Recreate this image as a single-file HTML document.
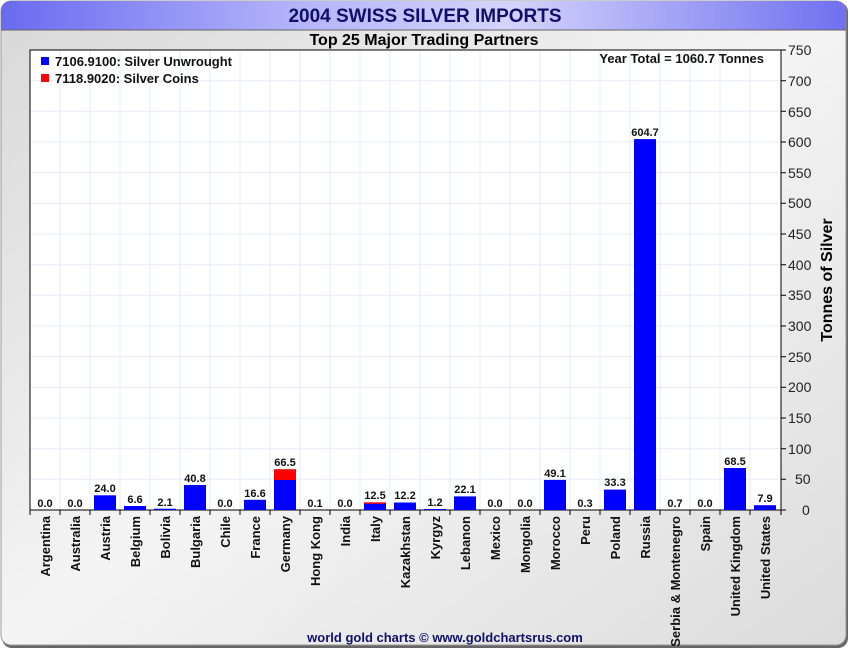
<!DOCTYPE html>
<html><head><meta charset="utf-8"><style>
html,body{margin:0;padding:0;width:850px;height:650px;overflow:hidden;background:#fff}
svg{display:block;font-family:"Liberation Sans",Arial,sans-serif}
</style></head><body>
<svg width="850" height="650" viewBox="0 0 850 650">
<defs>
<linearGradient id="tb" x1="0" x2="1" y1="0" y2="0"><stop offset="0" stop-color="#6a6af0"/><stop offset="0.35" stop-color="#b4b4fa"/><stop offset="0.6" stop-color="#d4d4fc"/><stop offset="1" stop-color="#7070f0"/></linearGradient>
<linearGradient id="bg" x1="0" x2="1" y1="0" y2="1"><stop offset="0" stop-color="#d8d8d8"/><stop offset="0.5" stop-color="#f4f4f4"/><stop offset="1" stop-color="#dcdcdc"/></linearGradient>
</defs>
<rect x="2" y="2" width="846" height="646" rx="10" fill="#666"/>
<rect x="1" y="1" width="845" height="644" rx="10" fill="url(#bg)" stroke="#999"/>
<path d="M1 30 V11 A10 10 0 0 1 11 1 H836 A10 10 0 0 1 846 11 V30 Z" fill="url(#tb)"/>
<line x1="1" y1="30" x2="846" y2="30" stroke="#666"/>
<text x="425" y="22" text-anchor="middle" font-size="19" font-weight="bold" fill="#10106a">2004 SWISS SILVER IMPORTS</text>
<text x="424" y="45" text-anchor="middle" font-size="16" font-weight="bold" fill="#000">Top 25 Major Trading Partners</text>
<rect x="30" y="50" width="751" height="460" fill="#fff"/>
<g stroke="#e2eef8" stroke-width="1">
<path d="M60 50V510M90 50V510M120 50V510M150 50V510M180 50V510M210 50V510M240 50V510M270 50V510M300 50V510M330 50V510M360 50V510M390 50V510M420 50V510M450 50V510M480 50V510M510 50V510M540 50V510M570 50V510M600 50V510M630 50V510M660 50V510M690 50V510M720 50V510M750 50V510"/>
<path d="M30 479.3H781M30 448.7H781M30 418H781M30 387.3H781M30 356.7H781M30 326H781M30 295.3H781M30 264.7H781M30 234H781M30 203.3H781M30 172.7H781M30 142H781M30 111.3H781M30 80.7H781"/>
</g>
<rect x="30" y="50" width="751" height="460" fill="none" stroke="#000"/>
<rect x="41" y="57" width="8" height="8" fill="#0000ff"/>
<rect x="41" y="74" width="8" height="8" fill="#ff0000"/>
<text x="55" y="66" font-size="13" font-weight="bold" fill="#111">7106.9100: Silver Unwrought</text>
<text x="55" y="83" font-size="13" font-weight="bold" fill="#111">7118.9020: Silver Coins</text>
<text x="764" y="63" text-anchor="end" font-size="13" font-weight="bold" fill="#111">Year Total = 1060.7 Tonnes</text>
<g font-size="14" fill="#222">
<text x="788" y="55">750</text><text x="788" y="86">700</text><text x="788" y="117">650</text><text x="788" y="147">600</text><text x="788" y="178">550</text><text x="788" y="208">500</text><text x="788" y="239">450</text><text x="788" y="270">400</text><text x="788" y="300">350</text><text x="788" y="331">300</text><text x="788" y="362">250</text><text x="788" y="392">200</text><text x="788" y="423">150</text><text x="788" y="454">100</text><text x="795" y="484">50</text><text x="802" y="515">0</text>
</g>
<g stroke="#000"><path d="M781 50h5M781 80.7h5M781 111.3h5M781 142h5M781 172.7h5M781 203.3h5M781 234h5M781 264.7h5M781 295.3h5M781 326h5M781 356.7h5M781 387.3h5M781 418h5M781 448.7h5M781 479.3h5M781 510h5"/>
<path d="M30 510v5M60 510v5M90 510v5M120 510v5M150 510v5M180 510v5M210 510v5M240 510v5M270 510v5M300 510v5M330 510v5M360 510v5M390 510v5M420 510v5M450 510v5M480 510v5M510 510v5M540 510v5M570 510v5M600 510v5M630 510v5M660 510v5M690 510v5M720 510v5M750 510v5M781 510v5"/></g>
<text transform="translate(832 280) rotate(-90)" text-anchor="middle" font-size="16" font-weight="bold">Tonnes of Silver</text>
<g fill="#0000ff">
<rect x="94" y="495.3" width="22" height="14.7"/>
<rect x="124" y="506" width="22" height="4"/>
<rect x="154" y="508.7" width="22" height="1.3"/>
<rect x="184" y="485" width="22" height="25"/>
<rect x="244" y="499.8" width="22" height="10.2"/>
<rect x="274" y="480" width="22" height="30"/>
<rect x="364" y="503" width="22" height="7"/>
<rect x="394" y="502.5" width="22" height="7.5"/>
<rect x="424" y="509" width="22" height="1"/>
<rect x="454" y="496.4" width="22" height="13.6"/>
<rect x="544" y="479.9" width="22" height="30.1"/>
<rect x="604" y="489.6" width="22" height="20.4"/>
<rect x="634" y="139.1" width="22" height="370.9"/>
<rect x="724" y="468" width="22" height="42"/>
<rect x="754" y="505.2" width="22" height="4.8"/>
</g>
<rect x="274" y="469.2" width="22" height="10.8" fill="#ff0000"/>
<rect x="364" y="502.3" width="22" height="1.5" fill="#ff0000"/>
<g font-size="11" font-weight="bold" text-anchor="middle" fill="#111">
<text x="45" y="507">0.0</text><text x="75" y="507">0.0</text><text x="105" y="492">24.0</text><text x="135" y="503">6.6</text><text x="165" y="506">2.1</text><text x="195" y="482">40.8</text><text x="225" y="507">0.0</text><text x="255" y="497">16.6</text><text x="285" y="466">66.5</text><text x="315" y="507">0.1</text><text x="345" y="507">0.0</text><text x="375" y="499">12.5</text><text x="405" y="499">12.2</text><text x="435" y="506">1.2</text><text x="465" y="493">22.1</text><text x="495" y="507">0.0</text><text x="525" y="507">0.0</text><text x="555" y="477">49.1</text><text x="585" y="507">0.3</text><text x="615" y="486">33.3</text><text x="645" y="136">604.7</text><text x="675" y="507">0.7</text><text x="705" y="507">0.0</text><text x="735" y="465">68.5</text><text x="765" y="502">7.9</text>
</g>
<g font-size="13" font-weight="bold" fill="#111" text-anchor="end">
<text transform="translate(50 516) rotate(-90)">Argentina</text>
<text transform="translate(80 516) rotate(-90)">Australia</text>
<text transform="translate(110 516) rotate(-90)">Austria</text>
<text transform="translate(140 516) rotate(-90)">Belgium</text>
<text transform="translate(170 516) rotate(-90)">Bolivia</text>
<text transform="translate(200 516) rotate(-90)">Bulgaria</text>
<text transform="translate(230 516) rotate(-90)">Chile</text>
<text transform="translate(260 516) rotate(-90)">France</text>
<text transform="translate(290 516) rotate(-90)">Germany</text>
<text transform="translate(320 516) rotate(-90)">Hong Kong</text>
<text transform="translate(350 516) rotate(-90)">India</text>
<text transform="translate(380 516) rotate(-90)">Italy</text>
<text transform="translate(410 516) rotate(-90)">Kazakhstan</text>
<text transform="translate(440 516) rotate(-90)">Kyrgyz</text>
<text transform="translate(470 516) rotate(-90)">Lebanon</text>
<text transform="translate(500 516) rotate(-90)">Mexico</text>
<text transform="translate(530 516) rotate(-90)">Mongolia</text>
<text transform="translate(560 516) rotate(-90)">Morocco</text>
<text transform="translate(590 516) rotate(-90)">Peru</text>
<text transform="translate(620 516) rotate(-90)">Poland</text>
<text transform="translate(650 516) rotate(-90)">Russia</text>
<text transform="translate(680 516) rotate(-90)">Serbia &amp; Montenegro</text>
<text transform="translate(710 516) rotate(-90)">Spain</text>
<text transform="translate(740 516) rotate(-90)">United Kingdom</text>
<text transform="translate(770 516) rotate(-90)">United States</text>
</g>
<text x="445" y="642" text-anchor="middle" font-size="13" font-weight="bold" fill="#10106a">world gold charts © www.goldchartsrus.com</text>
</svg>
</body></html>
